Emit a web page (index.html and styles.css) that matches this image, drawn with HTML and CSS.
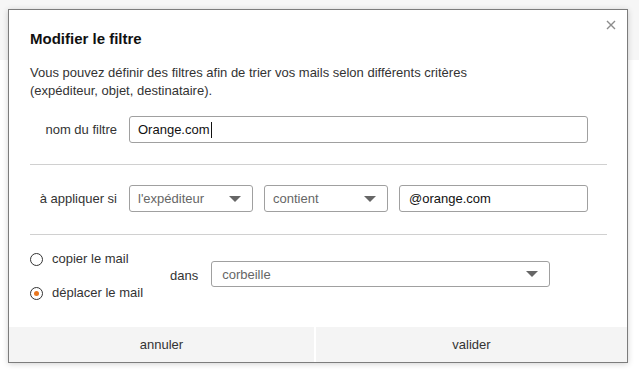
FILE: index.html
```
<!DOCTYPE html>
<html lang="fr">
<head>
<meta charset="utf-8">
<title>Modifier le filtre</title>
<link rel="stylesheet" href="styles.css">
</head>
<body>
<div class="dialog">
  <button class="close" aria-label="Fermer">
    <svg width="10" height="10" viewBox="0 0 10 10"><path d="M1 1 L9 9 M9 1 L1 9" stroke="#8c8c8c" stroke-width="1.4" fill="none"/></svg>
  </button>
  <div class="body">
    <h1 class="title">Modifier le filtre</h1>
    <p class="intro">Vous pouvez définir des filtres afin de trier vos mails selon différents critères<br>(expéditeur, objet, destinataire).</p>
    <div class="row row-name">
      <label class="label">nom du filtre</label>
      <div class="field field-name"><span class="value">Orange.com</span><span class="caret"></span></div>
    </div>
    <div class="sep"></div>
    <div class="row row-cond">
      <label class="label">à appliquer si</label>
      <div class="field select select-from"><span class="muted">l'expéditeur</span><span class="arrow"></span></div>
      <div class="field select select-op"><span class="muted">contient</span><span class="arrow"></span></div>
      <div class="field field-value"><span class="value">@orange.com</span></div>
    </div>
    <div class="sep sep-2"></div>
    <div class="row row-action">
      <div class="radios">
        <div class="radio"><span class="dot"></span><span>copier le mail</span></div>
        <div class="radio"><span class="dot on"></span><span>déplacer le mail</span></div>
      </div>
      <span class="dans">dans</span>
      <div class="field select select-folder"><span class="muted">corbeille</span><span class="arrow"></span></div>
    </div>
  </div>
  <div class="footer">
    <button class="btn btn-cancel">annuler</button>
    <button class="btn">valider</button>
  </div>
</div>
</body>
</html>
```
FILE: styles.css
```
* { box-sizing: border-box; }
html, body { margin: 0; }
body {
  width: 639px;
  height: 373px;
  padding: 9px 0 0 8px;
  background: linear-gradient(#f6f6f6 0, #f6f6f6 60px, #ffffff 60px);
  font-family: "Liberation Sans", Arial, sans-serif;
  font-size: 13px;
  color: #333;
  overflow: hidden;
}
.dialog {
  position: relative;
  width: 620px;
  height: 354px;
  background: #fff;
  border: 1px solid #7c7c7c;
  box-shadow: 0 1px 6px rgba(0,0,0,0.18);
  display: flex;
  flex-direction: column;
}
.close {
  position: absolute;
  top: 8px;
  right: 9px;
  width: 14px;
  height: 14px;
  padding: 2px;
  border: 0;
  background: transparent;
  display: flex;
  align-items: center;
  justify-content: center;
}
.body {
  flex: 1;
  padding: 19px 20px 0 21px;
  display: flex;
  flex-direction: column;
}
.title {
  margin: 0;
  font-size: 15px;
  line-height: 20px;
  font-weight: bold;
  color: #111;
}
.intro {
  margin: 15px 0 0;
  line-height: 18px;
  color: #333;
}
.row {
  display: flex;
  align-items: center;
}
.row-name { margin-top: 16px; }
.row-cond { margin-top: 20px; gap: 11px; }
.label {
  width: 87px;
  text-align: right;
  margin-right: 12px;
  color: #333;
}
.row-cond .label { margin-right: 1px; }
.field {
  height: 27px;
  border: 1px solid #a0a0a0;
  border-radius: 3px;
  display: flex;
  align-items: center;
  padding: 0 8px;
  background: #fff;
}
.value { color: #111; }
.muted { color: #666; }
.caret {
  width: 1px;
  height: 16px;
  background: #111;
  margin-left: 1px;
}
.field-name { width: 459px; }
.select { justify-content: space-between; padding-right: 11px; }
.select-from, .select-op { width: 124px; }
.field-value { width: 189px; padding-left: 9px; }
.arrow {
  width: 0;
  height: 0;
  border-left: 6px solid transparent;
  border-right: 6px solid transparent;
  border-top: 6px solid #666;
}
.sep {
  height: 1px;
  background: #d0d0d0;
  margin-top: 21px;
}
.sep-2 { margin-top: 22px; }
.row-action { margin-top: 14px; }
.radios {
  width: 140px;
  display: flex;
  flex-direction: column;
  gap: 14px;
}
.radio {
  display: flex;
  align-items: center;
  gap: 9px;
  line-height: 20px;
  color: #333;
}
.dot {
  width: 13px;
  height: 13px;
  border: 1px solid #333;
  border-radius: 50%;
  display: flex;
  align-items: center;
  justify-content: center;
}
.dot.on::after {
  content: "";
  width: 5px;
  height: 5px;
  border-radius: 50%;
  background: #e8761f;
}
.dans { margin-right: 13px; color: #333; margin-top: -2px; }
.select-folder { width: 339px; height: 26px; padding-left: 10px; margin-top: -4px; }
.footer {
  height: 35px;
  display: flex;
  gap: 2px;
  background: #fff;
}
.btn {
  flex: 1;
  border: 0;
  background: #f4f4f4;
  font-family: "Liberation Sans", Arial, sans-serif;
  font-size: 13px;
  color: #333;
  padding: 0;
}
.btn-cancel { flex: 0 0 305px; }
```
